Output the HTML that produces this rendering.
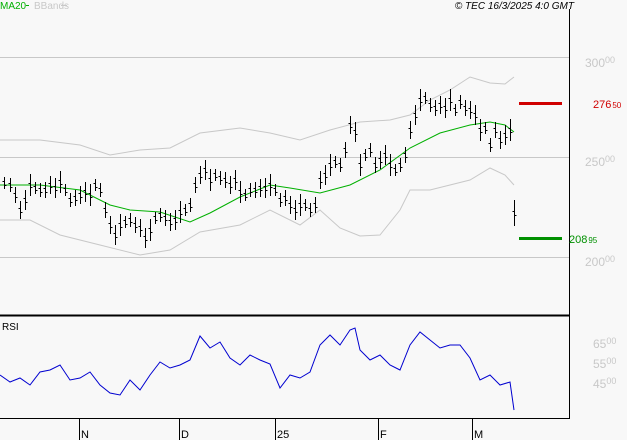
<!DOCTYPE html><html><head><style>
body{margin:0;background:#f8f8f8;width:627px;height:440px;overflow:hidden;font-family:"Liberation Sans",sans-serif}
svg{position:absolute;left:0;top:0}
</style></head><body>
<svg id="s" width="627" height="440" xmlns="http://www.w3.org/2000/svg" font-family="Liberation Sans, sans-serif">
<rect width="627" height="440" fill="#f8f8f8"/>
<g stroke="#c8c8c8" stroke-width="1"><line x1="0" y1="57.5" x2="569" y2="57.5"/><line x1="0" y1="157.5" x2="569" y2="157.5"/><line x1="0" y1="257.5" x2="569" y2="257.5"/></g>
<line x1="569.5" y1="9" x2="569.5" y2="419" stroke="#000"/>
<line x1="0" y1="315.5" x2="570" y2="315.5" stroke="#000" stroke-width="2"/>
<line x1="0" y1="418.5" x2="570" y2="418.5" stroke="#000"/>
<g stroke="#000"><line x1="79.5" y1="418" x2="79.5" y2="440"/><line x1="179.5" y1="418" x2="179.5" y2="440"/><line x1="275.5" y1="418" x2="275.5" y2="440"/><line x1="378.5" y1="418" x2="378.5" y2="440"/><line x1="472.5" y1="418" x2="472.5" y2="440"/></g>
<g font-size="11" fill="#000"><text x="81" y="438">N</text><text x="181" y="438">D</text><text x="277" y="438">25</text><text x="380" y="438">F</text><text x="474" y="438">M</text></g>
<text x="0" y="9" font-size="10" fill="#00b000">MA20</text><line x1="26" y1="5.5" x2="29" y2="5.5" stroke="#00b000"/>
<text x="34" y="9" font-size="10" fill="#c8c8c8">BBands</text><line x1="61" y1="5.5" x2="67" y2="5.5" stroke="#c8c8c8"/>
<text x="574" y="9" font-size="10" font-style="italic" fill="#000" text-anchor="end">© TEC 16/3/2025 4:0 GMT</text>
<text x="2" y="330" font-size="10" fill="#000">RSI</text>
<g fill="#c8c8c8" font-size="12"><text x="585" y="67">300<tspan font-size="9" dy="-4">00</tspan></text><text x="585" y="166">250<tspan font-size="9" dy="-4">00</tspan></text><text x="585" y="266">200<tspan font-size="9" dy="-4">00</tspan></text>
<text x="593" y="348">65<tspan font-size="9" dy="-4">00</tspan></text><text x="593" y="368">55<tspan font-size="9" dy="-4">00</tspan></text><text x="593" y="388">45<tspan font-size="9" dy="-4">00</tspan></text></g>
<line x1="519" y1="103.5" x2="562" y2="103.5" stroke="#d00000" stroke-width="3"/>
<text x="593" y="108" font-size="11" fill="#d00000">276<tspan font-size="8" dx="1">50</tspan></text>
<line x1="519" y1="238.5" x2="562" y2="238.5" stroke="#009000" stroke-width="3"/>
<text x="569" y="243" font-size="11" fill="#009000">208<tspan font-size="8" dx="1">95</tspan></text>
<polyline fill="none" stroke="#c8c8c8" points="0,140 40,140 80,145 110,155 140,150 170,148 200,133 240,128 270,133 300,140 330,130 360,122 390,120 410,115 430,100 450,90 470,77 490,83 505,84 514,77"/>
<polyline fill="none" stroke="#c8c8c8" points="0,220 30,220 60,235 100,245 140,255 170,250 200,232 240,225 270,210 300,225 320,210 340,228 360,236 380,235 400,210 410,190 430,190 450,185 470,180 490,168 505,175 514,185"/>
<polyline fill="none" stroke="#00b000" points="0,185 40,185 80,190 110,205 130,210 160,212 190,222 210,213 240,197 270,185 290,188 320,193 350,185 380,170 410,148 440,133 470,125 490,122 505,125 514,132"/>
<polyline fill="none" stroke="#0000d0" points="0,375 10,382 20,378 30,385 40,372 50,370 60,365 70,380 80,378 90,372 100,385 110,393 120,395 130,380 140,390 150,375 160,362 170,368 180,365 190,360 200,336 210,348 220,342 230,358 240,365 250,355 260,360 270,364 280,388 290,375 300,378 310,372 320,345 330,335 340,345 350,330 355,328 360,350 370,360 380,355 390,365 400,370 410,345 420,332 430,340 440,348 450,345 460,345 470,358 480,380 490,375 500,385 510,382 514,410"/>
<g id="bars" stroke="#000"></g>
</svg>
<script>
var d=[[4,183],[10,185],[15,195],[20,210],[25,200],[30,185],[35,188],[40,190],[45,190],[50,185],[55,188],[60,182],[65,190],[70,200],[75,198],[80,195],[85,192],[90,195],[95,185],[100,190],[105,210],[110,225],[115,235],[120,225],[125,222],[130,220],[135,225],[140,228],[145,238],[150,230],[155,218],[160,215],[165,218],[170,222],[175,220],[180,212],[185,210],[190,205],[195,185],[200,175],[205,170],[210,180],[215,175],[220,178],[225,180],[230,185],[235,180],[240,192],[245,195],[250,190],[255,190],[260,188],[265,188],[270,185],[275,190],[280,200],[285,198],[290,205],[295,210],[300,205],[305,205],[310,210],[315,205],[320,180],[325,175],[330,165],[335,162],[340,165],[345,150],[350,125],[355,132],[360,165],[365,155],[370,150],[375,165],[380,160],[385,155],[390,165],[395,170],[400,165],[405,155],[410,130],[415,115],[420,100],[425,98],[430,105],[435,108],[440,105],[445,108],[450,100],[455,110],[460,102],[465,108],[470,110],[475,115],[480,130],[485,128],[490,145],[495,130],[500,140],[505,135],[510,130],[514,213]];
var g=document.getElementById('bars'),h='';
d.forEach(function(p,i){var r=(i*7%6)+6;if(i==d.length-1)r=13;var x=p[0]+.5;h+='<line x1="'+x+'" y1="'+(p[1]-r)+'" x2="'+x+'" y2="'+(p[1]+r)+'"/><line x1="'+(x-2)+'" y1="'+(p[1]-2+.5)+'" x2="'+x+'" y2="'+(p[1]-2+.5)+'"/><line x1="'+x+'" y1="'+(p[1]+2+.5)+'" x2="'+(x+2)+'" y2="'+(p[1]+2+.5)+'"/>';});
g.innerHTML=h;
</script>
</body></html>
